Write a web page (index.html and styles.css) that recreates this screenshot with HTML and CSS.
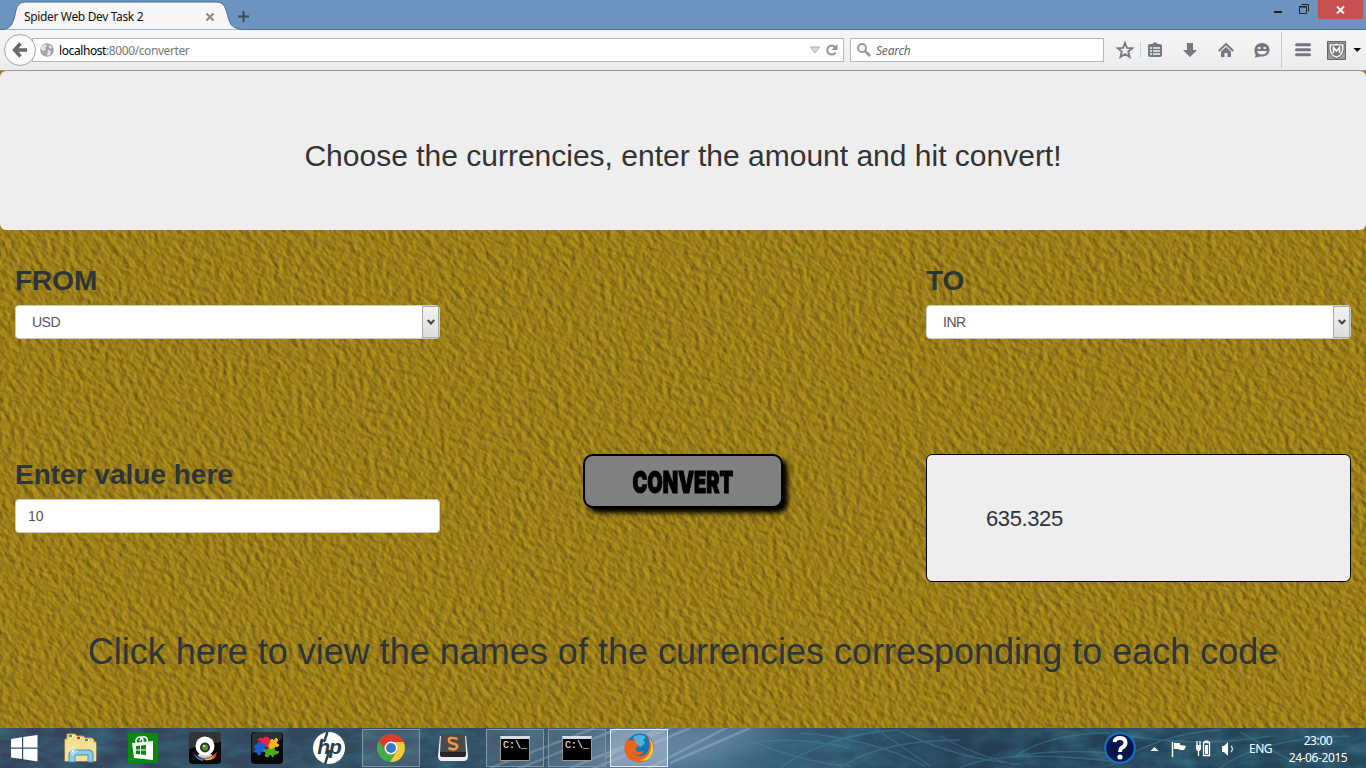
FILE: index.html
```html
<!DOCTYPE html>
<html lang="en">
<head>
<meta charset="utf-8">
<title>Spider Web Dev Task 2</title>
<link rel="stylesheet" href="styles.css">
</head>
<body>
<div class="screen">
  <header class="tabstrip">
    <div class="tab">
      <svg class="tab-shape" width="249" height="30" viewBox="0 0 249 30"><path d="M0 30C9 29 11 27 14 19L16 10Q18 2 25 2H216Q224 2 226 10L229 20C231 27 235 29.500 249 30Z" fill="#f6f6f6" stroke="#48709c"/></svg>
      <span class="tab-title">Spider Web Dev Task 2</span>
      <svg class="tab-close" width="10" height="10" viewBox="0 0 10 10"><path d="M1.500 1.500L8.500 8.500M8.500 1.500L1.500 8.500" stroke="#858c94" stroke-width="2.200"/></svg>
    </div>
    <svg class="tab-new" width="11" height="11" viewBox="0 0 11 11"><path d="M5.500 0V11M0 5.500H11" stroke="#404850" stroke-width="2"/></svg>
    <div class="window-buttons">
      <svg width="48" height="20" viewBox="0 0 48 20"><path d="M4 12H12" stroke="#222" stroke-width="2"/><path d="M29.500 6.500H36.500V13.500H29.500ZM29 7H37M31.500 4.500H38.500V11.500" fill="none" stroke="#222"/></svg>
      <div class="window-close"><svg width="9" height="8" viewBox="0 0 9 8"><path d="M1 .5L8 7.500M8 .5L1 7.500" stroke="#fff" stroke-width="1.800"/></svg></div>
    </div>
  </header>
  <nav class="toolbar">
    <div class="back"><svg width="16" height="16" viewBox="0 0 16 16"><path d="M8.500 1.500L2.500 8L8.500 14.500M3 8H15" fill="none" stroke="#65696d" stroke-width="3.400"/></svg></div>
    <div class="address">
      <svg width="14" height="14" viewBox="0 0 14 14"><circle cx="7" cy="7" r="6.800" fill="#a4a4a4"/><path d="M1 4L5 1L7 3L5 5L6 7L3 8L1 6ZM9 2L12 4L11 6L9 5ZM8 7L11 8L10 12L7 13Z" fill="#e4e4e4"/></svg>
      <span class="url"><b>localhost</b>:8000/converter</span>
      <svg class="address-end" width="28" height="14" viewBox="0 0 28 14"><path d="M.5 4H9.500L5 10Z" fill="#d4dce4" stroke="#a3adb8"/><path d="M25.500 9.500A4.500 4.500 0 1 1 25 4" fill="none" stroke="#8996a6" stroke-width="2"/><path d="M27.500 1V7H21.500Z" fill="#8996a6"/></svg>
    </div>
    <div class="search">
      <svg width="14" height="14" viewBox="0 0 14 14"><circle cx="5" cy="5" r="4" fill="none" stroke="#999" stroke-width="2"/><path d="M8 8L13 13" stroke="#999" stroke-width="2.600"/></svg>
      <span class="search-label">Search</span>
    </div>
    <svg class="tools" width="262" height="40" viewBox="1104 30 262 40">
      <path d="M1125 43L1127 48L1132.300 48.300L1128.200 51.600L1129.600 57L1125 54L1120.400 57L1121.800 51.600L1117.700 48.300L1123 48Z" fill="none" stroke="#737980" stroke-width="1.800"/>
      <path d="M1140.500 42V58" stroke="#cbd0d6"/>
      <path d="M1150 44H1152L1155 42L1158 44H1160Q1162 44 1162 46V55Q1162 57 1160 57H1150Q1148 57 1148 55V46Q1148 44 1150 44Z" fill="#737980"/><path d="M1150 48H1152M1153 48H1160M1150 51H1152M1153 51H1160M1150 54H1152M1153 54H1160" stroke="#f4f4f4" stroke-width="1.700"/>
      <path d="M1187 43H1193V50H1197L1190 57L1183 50H1187Z" fill="#737980"/>
      <path d="M1218.700 51L1226 44L1233.300 51" fill="none" stroke="#737980" stroke-width="1.900"/><path d="M1221 51.500L1226 47L1231 51.500V57H1227.500V53H1224.500V57H1221Z" fill="#737980"/>
      <path d="M1262 43C1266.500 43 1269.500 46 1269.500 50C1269.500 54 1266.500 56.500 1262 56.500C1260 56.500 1258 57 1254.500 57.500L1256 55C1254.800 53.800 1254.500 52 1254.500 50C1254.500 46 1257.500 43 1262 43Z" fill="#737980"/><path d="M1257 51H1267Q1266 54.500 1262 54.500Q1258 54.500 1257 51ZM1258 47H1260.500V49H1258ZM1263.500 47H1266V49H1263.500Z" fill="#f4f4f4"/>
      <path d="M1281.500 32V68" stroke="#c3c8ce"/>
      <path d="M1296.500 44.700H1309.500M1296.500 49.700H1309.500M1296.500 54.700H1309.500" stroke="#737980" stroke-width="3" stroke-linecap="round"/>
      <path d="M1327.500 41.500H1345.500V59.500H1327.500Z" fill="#9b9b9b" stroke="#666"/><path d="M1329 43.500Q1333 44.500 1336.500 43Q1340 44.500 1344 43.500V50Q1343 56 1336.500 58.500Q1330 56 1329 50Z" fill="#fff" stroke="#666"/><path d="M1331 45.500H1342V50Q1341 55 1336.500 56.500Q1332 55 1331 50Z" fill="#777"/><path d="M1333.500 53V47.500L1336.500 51L1339.500 47.500V53" fill="none" stroke="#fff" stroke-width="1.600"/>
      <path d="M1353.500 48H1361L1357.200 52Z" fill="#000"/>
    </svg>
  </nav>
  <main class="page">
    <svg class="texture" width="1366" height="658" viewBox="0 0 1366 658">
      <filter id="stucco" filterUnits="userSpaceOnUse" x="-100" y="-1150" width="1750" height="1750" color-interpolation-filters="sRGB">
        <feTurbulence type="fractalNoise" baseFrequency="0.13 0.18" numOctaves="4" seed="8"/>
        <feDiffuseLighting surfaceScale="1" diffuseConstant="1.080" lighting-color="#bb981e"><feDistantLight azimuth="290" elevation="50"/></feDiffuseLighting>
      </filter>
      <rect x="-100" y="-1150" width="1750" height="1750" transform="rotate(50)" filter="url(#stucco)"/>
    </svg>
    <section class="banner">Choose the currencies, enter the amount and hit convert!</section>
    <section class="row currencies">
      <div class="field"><label class="caption">FROM</label><div class="control select"><span>USD</span><i class="arrow"><svg width="8" height="7" viewBox="0 0 8 7"><path d="M.8 1L4 4.500L7.200 1" fill="none" stroke="#444" stroke-width="2"/></svg></i></div></div>
      <div class="field"><label class="caption">TO</label><div class="control select"><span>INR</span><i class="arrow"><svg width="8" height="7" viewBox="0 0 8 7"><path d="M.8 1L4 4.500L7.200 1" fill="none" stroke="#444" stroke-width="2"/></svg></i></div></div>
    </section>
    <section class="row amounts">
      <div class="field"><label class="caption">Enter value here</label><div class="control">10</div></div>
      <div class="convert"><span class="convert-label">CONVERT</span></div>
      <div class="result">635.325</div>
    </section>
    <p class="names">Click here to view the names of the currencies corresponding to each code</p>
  </main>
  <footer class="taskbar">
    <svg class="grass" width="1366" height="40" viewBox="0 0 1366 40">
      <filter id="soft"><feGaussianBlur stdDeviation=".7"/></filter>
      <filter id="wide" x="-30%" y="-100%" width="160%" height="300%"><feGaussianBlur stdDeviation="14"/></filter>
      <filter id="mottle" x="0" y="0" width="100%" height="100%" color-interpolation-filters="sRGB"><feTurbulence type="fractalNoise" baseFrequency=".035 .08" numOctaves="4" seed="4"/><feColorMatrix values="0 0 0 0 .22  0 0 0 0 .42  0 0 0 0 .5  1.600 0 0 0 -.5"/></filter>
      <rect width="1366" height="40" filter="url(#mottle)"/>
      <path d="M560 42L640 -4H790L700 42Z" fill="#8fa6c4" opacity=".5" filter="url(#wide)"/>
      <path d="M880 0H1040L1000 40H900Z" fill="#263e52" opacity=".5" filter="url(#wide)"/>
      <g fill="none" stroke="#4787a0" opacity=".45" filter="url(#soft)">
        <path d="M780 40Q830 5 900 2M800 5Q870 10 925 38M740 8Q800 35 850 38M875 0L930 38M840 40Q880 12 960 12M900 3Q960 32 1020 36M1015 28Q1050 5 1110 5M1015 28Q1060 20 1130 26M940 8Q970 25 1015 37M960 40Q1000 20 1120 34M1110 38Q1160 5 1220 2M1130 8Q1200 20 1270 8M1220 40Q1260 10 1350 8M700 32Q760 0 850 20M1240 4L1300 38" stroke-width="1.400"/>
      </g>
      <g stroke="#c0d1e4" opacity=".3" filter="url(#soft)"><path d="M490 40L595 0M515 42L620 0M570 40L670 0M590 42L690 0M645 42L730 -2M670 35L750 0M605 30L660 0" stroke-width="2.500"/></g>
    </svg>
    <div class="apps">
      <div class="app start"><svg width="27" height="27" viewBox="0 0 27 27"><path d="M0 4L11 2.300V12.500H0ZM12.200 2.100L26.500 0V12.500H12.200ZM0 13.700H11V24L0 22.400ZM12.200 13.700H26.500V26.500L12.200 24.300Z" fill="#fff"/></svg></div>
      <div class="app"><svg width="34" height="32" viewBox="0 0 34 32"><path d="M3 2H11L13 4H19L21 6H28L30 8V10H32V29H1V7H3Z" fill="#f3dc8c" stroke="#c9a449"/><path d="M5 3H9V5H5ZM13 5H17V7H13ZM21 7H25V9H21Z" fill="#fff"/><path d="M5 3H8V5H5Z" fill="#20a53a"/><path d="M13 5H16V7H13Z" fill="#d93232"/><path d="M21 7H24V9H21Z" fill="#218bdd"/><path d="M1 9H16L19 11H32V29H1Z" fill="#f5df94"/><path d="M5 30V22Q5 18 9 18H25Q29 18 29 22V30H24V23H11V30Z" fill="#8fcbe6" stroke="#3f91bd"/><path d="M9 14V24M4 19H14M6 16L12 22M12 16L6 22" stroke="#fff" stroke-width=".7"/></svg></div>
      <div class="app"><svg width="30" height="30" viewBox="0 0 30 30"><path d="M0 0H30V30H0Z" fill="#078b0b"/><path d="M4 10L25 8V27L6 25Z" fill="#fff"/><path d="M8 10V7Q9 4 12 4Q15 4 15 9M12 8Q13 3 17 4Q20 5 19 9" fill="none" stroke="#fff" stroke-width="1.500"/><path d="M8 13L12 12.500V16.500H8ZM13 12.400L18 12V16.500H13ZM8 17.500H12V21.500L8 21ZM13 17.500H18V22L13 21.600Z" fill="#078b0b"/></svg></div>
      <div class="app"><svg width="32" height="32" viewBox="0 0 32 32"><rect width="32" height="32" rx="4" fill="#090909"/><path d="M0 4Q0 0 4 0H28Q32 0 32 4V10Q14 12 0 17Z" fill="#343434"/><path d="M4 20Q16 32 28 20L26 26Q15 32 4 20" fill="#e54929"/><path d="M4 20Q8 27 16 27L13 29Q6 27 4 20" fill="#1689d2"/><path d="M16 27Q22 27 25 23L23 27Q19 29 16 28Z" fill="#f5c338"/><ellipse cx="16" cy="23" rx="7" ry="3" fill="#ccc"/><circle cx="16" cy="14" r="9.500" fill="#fff"/><circle cx="16" cy="15.500" r="5" fill="#333"/><circle cx="16" cy="15.500" r="3" fill="#4d9b22"/><circle cx="15" cy="14" r="1" fill="#d8ffb0"/></svg></div>
      <div class="app"><svg width="32" height="32" viewBox="0 0 32 32"><rect width="32" height="32" rx="4" fill="#090909"/><path d="M1 3Q3 0 7 0H28Q31 0 31 7Q12 12 1 22Z" fill="#303030"/><g stroke-linejoin="round" stroke-width="1"><path d="M7 8L9 6L12 7L14 5L18 6L19 9L21 12L18 13V15H14V12L10 11V9Z" fill="#ea204e" stroke="#ea204e"/><path d="M19 9L21 7L23 9L25 6L27 8L25 11L28 13L26 15L24 14L22 18L18 16V12L20 11Z" fill="#f8b719" stroke="#f8b719"/><path d="M3 14L6 13L8 10L11 12L14 13L13 16L15 17L13 20L9 19L10 22L7 23L6 20L3 20L5 17Z" fill="#185cd0" stroke="#185cd0"/><path d="M12 18L15 18L18 16L20 18L23 16L24 19L28 20L26 22L23 22L22 25L19 22L17 25L14 24L15 21Z" fill="#4daa23" stroke="#4daa23"/></g></svg></div>
      <div class="app hp"><span class="hp-text">hp</span><svg class="hp-lines" width="32" height="32" viewBox="0 0 32 32"><path d="M14.500 0L11 10M12 32L16.500 18" stroke="#263b4b" stroke-width="2.400"/></svg></div>
      <div class="app open"><svg width="28" height="28" viewBox="0 0 28 28"><circle cx="14" cy="14" r="14" fill="#44ab47"/><path d="M2 7Q7 0 14 0Q23 0 27 8H14L8 16Z" fill="#dd3a2f"/><path d="M14 8H26.500Q30 15 25 22.500Q21 28 13 28L20 17Z" fill="#f6ca31"/><circle cx="14" cy="14" r="6.500" fill="#fff"/><circle cx="14" cy="14" r="5" fill="#357bc5"/></svg></div>
      <div class="app"><svg width="30" height="28" viewBox="0 0 30 28"><path d="M2 2L0 22Q0 26 3 27H27Q30 26 30 22L28 2Z" fill="#eee"/><path d="M3 1Q15 -1 27 1L28 18H2Z" fill="#4b4b4b"/><path d="M2 18H28V21Q28 23 26 23H4Q2 23 2 21Z" fill="#262626"/><path d="M19.500 5Q10 2 11 7Q11 8.500 15 9.500Q20 10.500 19 13.500Q17 17 10.500 14" fill="none" stroke="#f59a42" stroke-width="2.500"/></svg></div>
      <div class="app open"><div class="terminal">C:\_</div></div>
      <div class="app open"><div class="terminal">C:\_</div></div>
      <div class="app open active"><svg width="30" height="30" viewBox="0 0 30 30"><circle cx="16" cy="14" r="13.500" fill="#1676bb"/><path d="M9 4Q16 0 22 4L19 7L21 10L17 14L12 12Z" fill="#49b4df"/><path d="M23 3Q31 9 29 18Q27 28 16 29.500Q5 29 1 20Q-1 12 4 5L6 8L12 6L11 10L15 12L12 15Q10 17 14 19L20 18Q17 24 10 21Q18 26 23 20Q28 12 23 3Z" fill="#e6641c"/><path d="M24 4Q29 10 26 19Q22 27 15 27Q27 30 29 18Q30 9 24 4" fill="#fbc93c"/></svg></div>
    </div>
    <div class="tray">
      <div class="help"><svg width="32" height="32" viewBox="0 0 32 32"><circle cx="16" cy="16" r="14.800" fill="#07164b" stroke="#1674c5" stroke-width="2"/><path d="M10.500 10Q11 6 16 6Q21.500 6 21.500 11Q21.500 14 17.500 16Q16 17 16 20" fill="none" stroke="#fff" stroke-width="4"/><circle cx="16" cy="25" r="2.600" fill="#fff"/></svg></div>
      <svg class="tray-icons" width="90" height="24" viewBox="1150 736 90 24"><path d="M1150.500 751L1154.500 747L1158.500 751Z" fill="#fff"/><path d="M1172.500 742V757" stroke="#fff" stroke-width="1.500"/><path d="M1174 743H1180V745L1186 746L1184 750H1180L1178 749H1174Z" fill="#fff"/><path d="M1203.500 742.500H1209.500V755.500H1203.500Z" fill="none" stroke="#fff" stroke-width="1.300"/><path d="M1205 745H1208V754H1205ZM1204.500 740.500H1208.500V742H1204.500Z" fill="#fff"/><path d="M1197 741V746M1200 741V746M1198.500 750V756" stroke="#fff" stroke-width="1.300"/><path d="M1196 745H1201V749L1199.500 751H1197.500L1196 749Z" fill="#fff"/><path d="M1222 746H1224L1228 742V756L1224 752H1222Z" fill="#fff"/><path d="M1231 746Q1234 749 1231 752" fill="none" stroke="#d9e5ec" stroke-width="1.200"/></svg>
      <span class="language">ENG</span>
      <div class="clock"><span class="time">23:00</span><span class="date">24-06-2015</span></div>
    </div>
  </footer>
</div>
</body>
</html>
```

FILE: styles.css
```css
*{box-sizing:border-box}
body{margin:0;overflow:hidden;font-family:"Liberation Sans",Arial,sans-serif}
svg{display:block;flex:none}
.screen{width:1366px;height:768px;display:flex;flex-direction:column;overflow:hidden}
.tabstrip{height:30px;background:#6b95c0;border-bottom:1px solid #48709c;display:flex;align-items:flex-start;font-family:"Noto Sans",sans-serif}
.tab{position:relative;width:237px;height:30px;display:flex;align-items:center;padding:3px 0 0 24px}
.tab-shape{position:absolute;left:0;top:0}
.tab-title{position:relative;font-size:12px;width:180px;letter-spacing:-.35px;white-space:nowrap;color:#111}
.tab-close{position:relative;margin-left:1px}
.tab-new{margin:11px 0 0 1px;position:relative}
.window-buttons{margin-left:auto;display:flex;padding-right:3px}
.window-close{width:45px;height:19px;background:#c75050;display:flex;align-items:center;justify-content:center}
.toolbar{height:41px;background:linear-gradient(#f6f6f6,#ececec);border-bottom:1px solid #999;display:flex;align-items:center;font-family:"Noto Sans",sans-serif;font-size:12px;padding-left:4px}
.back{width:32px;height:32px;border:1px solid #a2a8ae;border-radius:50%;background:#fbfbfb;display:flex;align-items:center;justify-content:center;z-index:1;flex:none}
.address{width:812px;height:24px;margin-left:-4px;background:#fff;border:1px solid #b0bac4;display:flex;align-items:center;padding:0 5px 0 7px;gap:5px}
.url{color:#777;white-space:nowrap;letter-spacing:-.41px}
.url b{font-weight:400;color:#000}
.address-end{margin-left:auto}
.search{width:254px;height:24px;margin-left:6px;background:#fff;border:1px solid #b0bac4;display:flex;align-items:center;padding-left:6px;gap:5px}
.search-label{font-style:italic;color:#666;letter-spacing:-.2px}
.page{height:657px;position:relative;overflow:hidden;color:#2c3539;background:#9b7d12}
.texture{position:absolute;left:0;top:0}
.banner{position:relative;height:159px;background:#eee;border-radius:6px;display:flex;align-items:center;justify-content:center;font-size:30px;padding-top:10px;color:#333;white-space:nowrap}
.row{position:relative;display:flex;justify-content:space-between;padding:0 15px}
.currencies{padding-top:30px}
.amounts{padding-top:115px}
.field{width:425px}
.caption{display:block;font-size:28px;font-weight:700;line-height:40px;height:45px;padding-top:1px}
.control{height:34px;background:#fff;border:1px solid #ccc;border-radius:4px;font-size:14px;color:#555;display:flex;align-items:center;padding-left:12px}
.select{padding-left:16px;justify-content:space-between;letter-spacing:-.5px}
.arrow{width:17px;height:32px;border:1px solid #aaa;background:linear-gradient(#f2f2f2,#ddd);display:flex;align-items:center;justify-content:center}
.convert{width:200px;height:54px;border:2px solid #000;border-radius:10px;background:gray;box-shadow:5px 5px 5px #000;display:flex;align-items:center;justify-content:center}
.convert-label{font:900 30px Inter,sans-serif;color:#000;-webkit-text-stroke:1.2px #000;transform:scaleX(.665);padding-top:1px}
.result{width:425px;height:128px;background:#eee;border:1px solid #000;border-radius:6px;padding:51px 0 0 59px;font-size:22px;line-height:25px;letter-spacing:-.4px}
.names{position:relative;margin:49px 0 0;text-align:center;font-size:36px;line-height:42px;white-space:nowrap}
.taskbar{height:40px;position:relative;background:linear-gradient(90deg,#36435a,#30495f 35%,#436080 45%,#39617b 55%,#243d52 72%,#23475b);display:flex;overflow:hidden}
.grass{position:absolute;left:0;top:0}
.apps{display:flex;position:relative;padding-top:1px}
.app{width:58px;height:38px;margin-right:4px;display:flex;align-items:center;justify-content:center}
.start{width:48px}
.open{border:1px solid #81969f;background:#8a9ca533}
.active{border-color:#e6edf5;background:#bbccdf70}
.hp{position:relative}
.hp-text{width:32px;height:32px;border-radius:50%;background:#fff;color:#263b4b;font:italic bold 21px/29px "Liberation Sans",sans-serif;text-align:center;letter-spacing:-1px}
.hp-lines{position:absolute;left:13px;top:3px}
.terminal{width:30px;height:25px;background:#000;border:1px solid #999;border-top:3px solid #d8dce3;color:#fff;font:10px/14px "Liberation Mono",monospace;padding-left:2px;white-space:nowrap}
.tray{margin-left:auto;display:flex;position:relative;align-items:center;color:#fff;font-family:"Noto Sans",sans-serif;font-size:12px;padding-right:19px}
.help{margin-right:14px}
.tray-icons{margin-right:9px}
.language{width:40px;letter-spacing:-.5px}
.clock{width:58px;height:38px;padding-top:3px;display:flex;flex-direction:column;align-items:center;line-height:17px;white-space:nowrap;letter-spacing:-.4px}
```
